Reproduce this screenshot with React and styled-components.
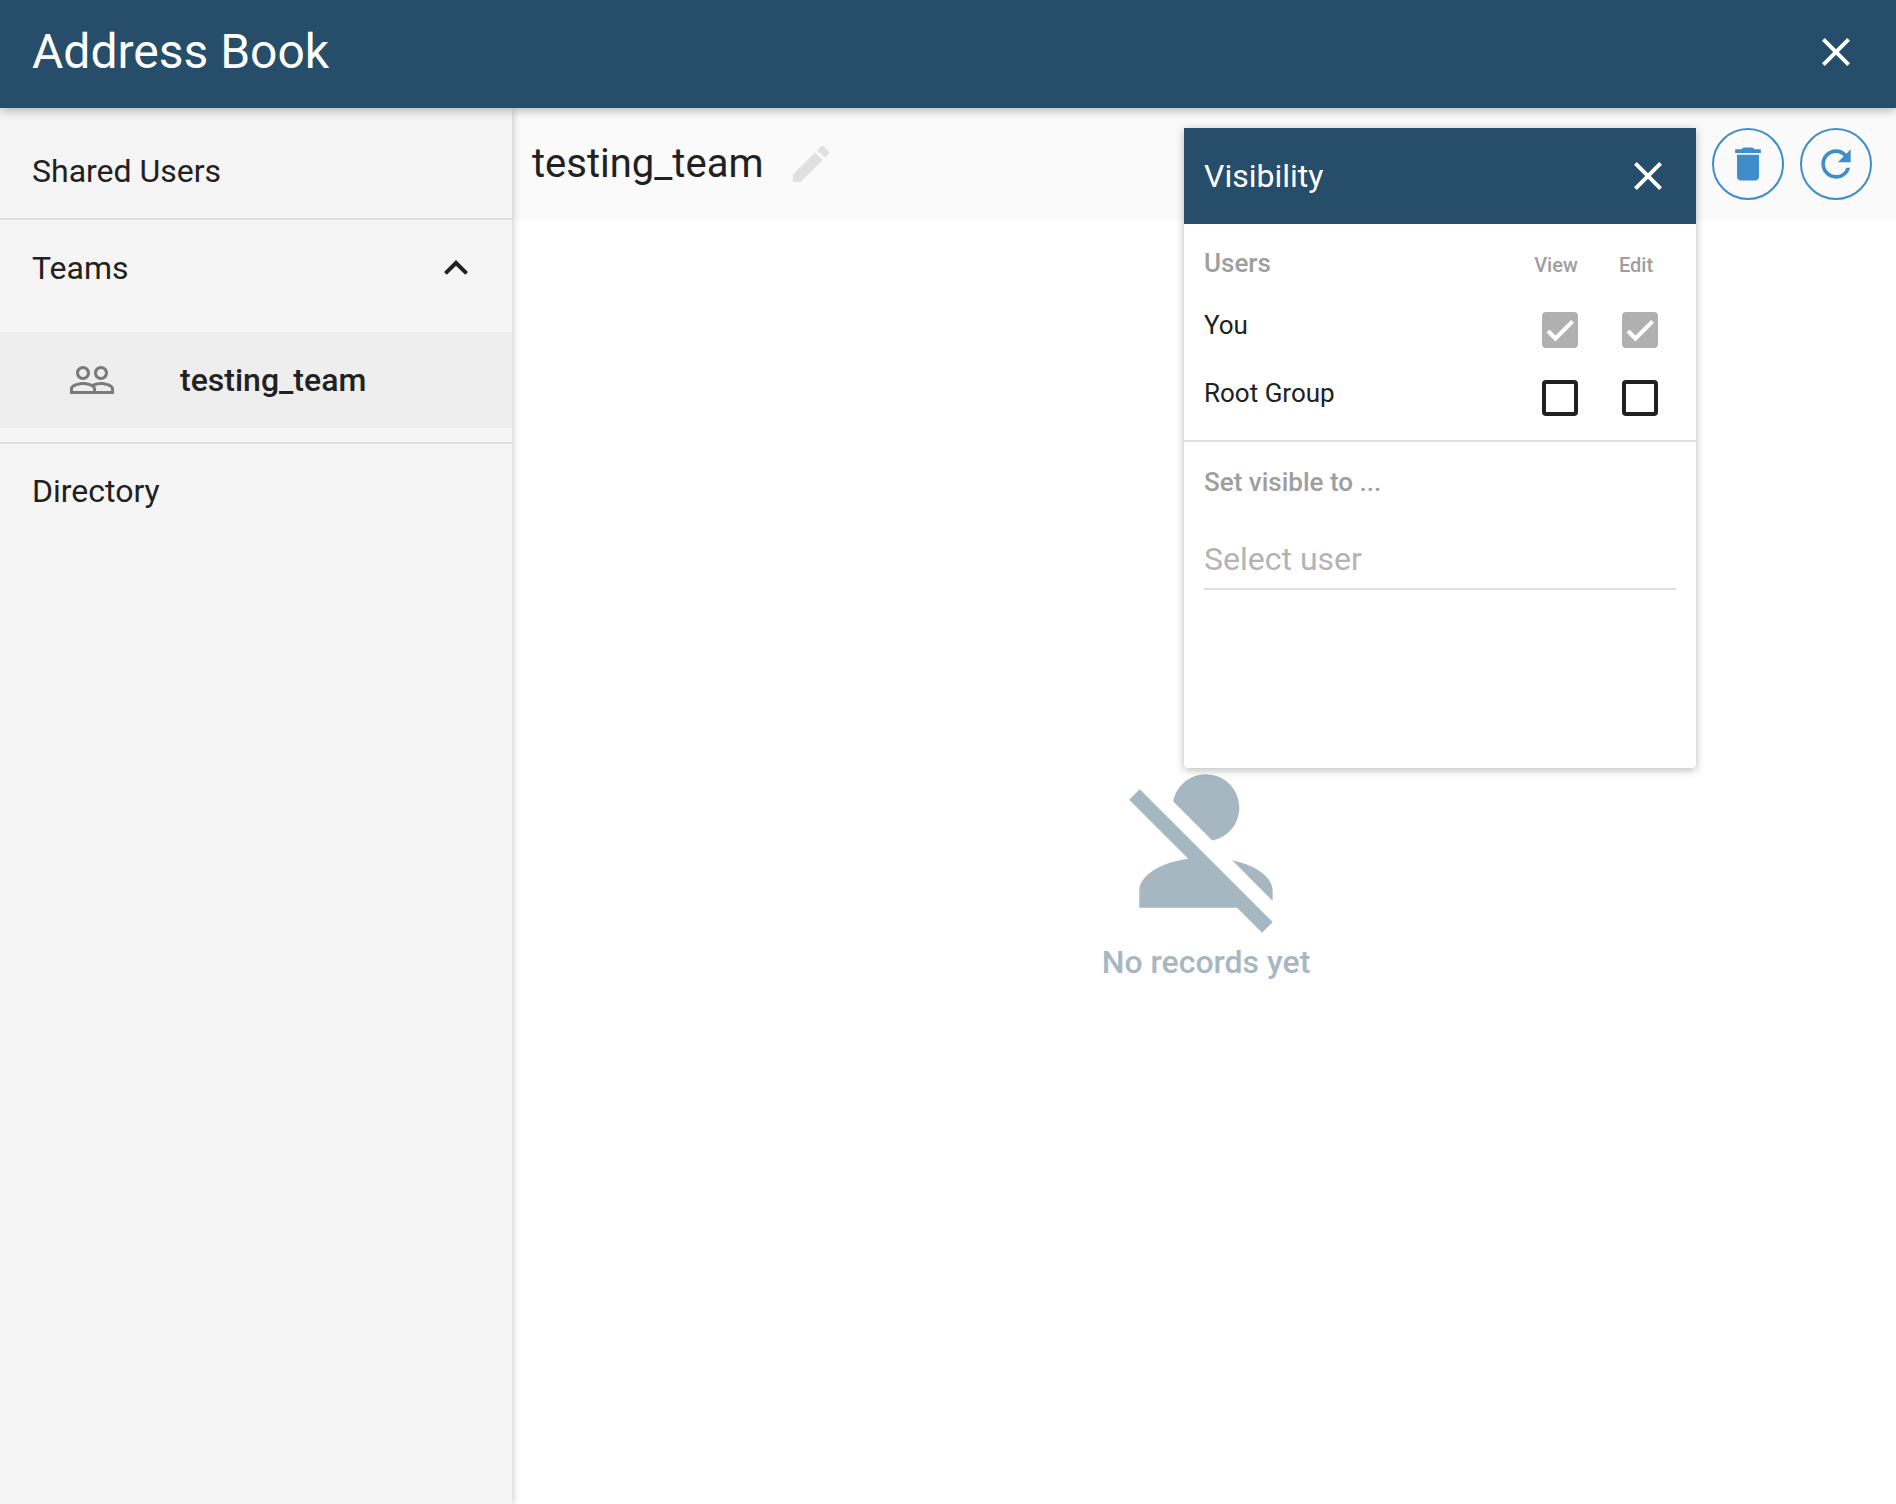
import React, { useState } from "react";
import styled, { createGlobalStyle } from "styled-components";
import {
  MdClose,
  MdDelete,
  MdEdit,
  MdExpandLess,
  MdExpandMore,
  MdPeopleOutline,
  MdRefresh,
} from "react-icons/md";

const color = {
  navy: "#264d69",
  blue: "#3f8dca",
  ink: "#212121",
  muted: "#9e9e9e",
  hint: "#b3b3b3",
  line: "#e0e0e0",
  slate: "#a7b7c2",
};

const GlobalStyle = createGlobalStyle`
  *, *::before, *::after { box-sizing: border-box; }
  body {
    margin: 0;
    font-family: Roboto, "Liberation Sans", sans-serif;
    color: ${color.ink};
    background: #fff;
  }
`;

const Page = styled.div`
  display: flex;
  flex-direction: column;
  min-height: 100vh;
`;

const Header = styled.header`
  display: flex;
  align-items: center;
  justify-content: space-between;
  position: relative;
  z-index: 2;
  padding: 20px 36px 24px 32px;
  color: #fff;
  background: ${color.navy};
  box-shadow: 0 2px 10px rgba(0, 0, 0, 0.3);
`;

const Title = styled.h1`
  margin: 0;
  font-size: 48px;
  line-height: 64px;
  font-weight: 400;
`;

const IconButton = styled.button`
  display: flex;
  padding: 0;
  border: 0;
  background: none;
  color: ${(p) => p.$tone || "inherit"};
  font-size: 48px;
  cursor: pointer;
`;

const Body = styled.div`
  display: flex;
  flex: 1;
`;

const Sidebar = styled.nav`
  flex: 0 0 512px;
  position: relative;
  z-index: 1;
  padding-top: 16px;
  background: #f5f5f5;
  box-shadow: 0 0 8px rgba(0, 0, 0, 0.26);
`;

const Section = styled.div`
  border-bottom: ${(p) => (p.$last ? "0" : `2px solid ${color.line}`)};
`;

const NavLink = styled.a`
  display: flex;
  align-items: center;
  height: 94px;
  padding: 0 32px;
  font-size: 32px;
  line-height: 40px;
  color: inherit;
  text-decoration: none;
`;

const NavToggle = styled.button`
  display: flex;
  align-items: center;
  justify-content: space-between;
  width: 100%;
  height: 96px;
  padding: 0 32px;
  border: 0;
  background: none;
  color: inherit;
  font: inherit;
  font-size: 32px;
  line-height: 40px;
  cursor: pointer;

  svg {
    font-size: 48px;
  }
`;

const TeamList = styled.ul`
  margin: 0;
  padding: 16px 0 14px;
  list-style: none;
`;

const TeamLink = styled.a`
  display: flex;
  align-items: center;
  gap: 64px;
  height: 96px;
  padding: 0 32px 0 68px;
  background: #eeeeee;
  color: inherit;
  font-size: 32px;
  line-height: 40px;
  font-weight: 500;
  text-decoration: none;

  svg {
    font-size: 48px;
    color: #7a7a7a;
  }
`;

const Main = styled.main`
  display: flex;
  flex: 1;
  flex-direction: column;
  min-width: 0;
`;

const Toolbar = styled.div`
  display: flex;
  align-items: center;
  position: relative;
  gap: 16px;
  height: 112px;
  padding: 0 24px 0 20px;
  background: #fafafa;
`;

const TeamName = styled.h2`
  display: flex;
  align-items: center;
  gap: 24px;
  flex: 1;
  margin: 0;
  font-size: 40px;
  line-height: 48px;
  font-weight: 400;
`;

const RoundButton = styled.button`
  display: flex;
  align-items: center;
  justify-content: center;
  width: 72px;
  height: 72px;
  padding: 0;
  border: 2px solid ${color.blue};
  border-radius: 50%;
  background: none;
  color: ${color.blue};
  font-size: 44px;
  cursor: pointer;
`;

const Panel = styled.section`
  position: absolute;
  top: 20px;
  right: 200px;
  width: 512px;
  min-height: 640px;
  border-radius: 0 0 4px 4px;
  background: #fff;
  box-shadow: 0 2px 8px rgba(0, 0, 0, 0.28);
`;

const PanelHeader = styled.div`
  display: flex;
  align-items: center;
  justify-content: space-between;
  height: 96px;
  padding: 0 24px 0 20px;
  background: ${color.navy};
  color: #fff;
`;

const PanelTitle = styled.h3`
  margin: 0;
  font-size: 32px;
  line-height: 40px;
  font-weight: 400;
`;

const PanelSection = styled.div`
  padding: ${(p) => p.$padding};
  border-bottom: ${(p) => (p.$divided ? `2px solid ${color.line}` : "0")};
`;

const UserTable = styled.table`
  width: 100%;
  border-collapse: collapse;
  table-layout: fixed;
`;

const HeadCell = styled.th`
  width: ${(p) => (p.$narrow ? "80px" : "auto")};
  padding: ${(p) => (p.$narrow ? "23px 8px 15px 0" : "23px 0 15px")};
  color: ${color.muted};
  font-size: ${(p) => (p.$narrow ? "20px" : "26px")};
  line-height: 32px;
  font-weight: 500;
  text-align: ${(p) => (p.$narrow ? "center" : "left")};
  vertical-align: baseline;
`;

const NameCell = styled.th`
  height: 68px;
  padding: 0 0 10px;
  font-size: 26px;
  line-height: 32px;
  font-weight: 400;
  text-align: left;
`;

const CheckCell = styled.td`
  padding: 0;
`;

const CheckWrap = styled.span`
  display: grid;
  place-items: center;

  > * {
    grid-area: 1 / 1;
  }

  svg {
    width: 28px;
    height: 28px;
    overflow: visible;
    fill: none;
    stroke: #fff;
    stroke-width: 3.5;
    pointer-events: none;
  }
`;

const CheckInput = styled.input`
  appearance: none;
  width: 36px;
  height: 36px;
  margin: 0;
  border: 4px solid ${color.ink};
  border-radius: 4px;
  background: #fff;

  &:checked {
    background: ${color.ink};
  }

  &:disabled {
    border-color: #b0b0b0;
    background: #b0b0b0;
  }
`;

const FieldLabel = styled.label`
  display: block;
  color: ${color.muted};
  font-size: 26px;
  line-height: 32px;
  font-weight: 500;
`;

const UserInput = styled.input`
  display: block;
  width: 100%;
  height: 64px;
  margin-top: 28px;
  padding: 4px 0 0;
  border: 0;
  border-bottom: 2px solid ${color.line};
  outline: 0;
  background: none;
  color: inherit;
  font: inherit;
  font-size: 32px;
  line-height: 40px;

  &::placeholder {
    color: ${color.hint};
    opacity: 1;
  }
`;

const EmptyState = styled.div`
  display: flex;
  flex: 1;
  flex-direction: column;
  align-items: center;
  justify-content: center;
  padding-left: 4px;
  color: ${color.slate};
  font-size: 32px;
  line-height: 42px;
  font-weight: 500;

  svg {
    width: 200px;
    height: 200px;
    fill: currentColor;
  }

  p {
    margin: 0;
  }
`;

function Checkbox({ label, checked, ...rest }) {
  const [on, setOn] = useState(Boolean(checked));
  return (
    <CheckWrap>
      <CheckInput
        type="checkbox"
        aria-label={label}
        checked={on}
        onChange={(e) => setOn(e.target.checked)}
        {...rest}
      />
      {on && (
        <svg viewBox="0 0 24 24" aria-hidden="true">
          <path d="M1.73 12.91 8.1 19.28 22.79 4.59" />
        </svg>
      )}
    </CheckWrap>
  );
}

const users = [
  { name: "You", granted: true },
  { name: "Root Group", granted: false },
];

export default function App() {
  const [teamsOpen, setTeamsOpen] = useState(true);
  const [panelOpen, setPanelOpen] = useState(true);

  return (
    <Page>
      <GlobalStyle />
      <Header>
        <Title>Address Book</Title>
        <IconButton type="button" aria-label="Close">
          <MdClose />
        </IconButton>
      </Header>
      <Body>
        <Sidebar>
          <Section>
            <NavLink href="#shared">Shared Users</NavLink>
          </Section>
          <Section>
            <NavToggle
              type="button"
              aria-expanded={teamsOpen}
              onClick={() => setTeamsOpen(!teamsOpen)}
            >
              Teams
              {teamsOpen ? <MdExpandLess /> : <MdExpandMore />}
            </NavToggle>
            {teamsOpen && (
              <TeamList>
                <li>
                  <TeamLink href="#testing_team" aria-current="page">
                    <MdPeopleOutline />
                    testing_team
                  </TeamLink>
                </li>
              </TeamList>
            )}
          </Section>
          <Section $last>
            <NavLink href="#directory">Directory</NavLink>
          </Section>
        </Sidebar>
        <Main>
          <Toolbar>
            <TeamName>
              testing_team
              <IconButton type="button" aria-label="Rename team" $tone={color.line}>
                <MdEdit />
              </IconButton>
            </TeamName>
            <RoundButton type="button" aria-label="Delete team">
              <MdDelete />
            </RoundButton>
            <RoundButton type="button" aria-label="Refresh">
              <MdRefresh />
            </RoundButton>
            {panelOpen && (
              <Panel aria-label="Visibility">
                <PanelHeader>
                  <PanelTitle>Visibility</PanelTitle>
                  <IconButton
                    type="button"
                    aria-label="Close visibility"
                    onClick={() => setPanelOpen(false)}
                  >
                    <MdClose />
                  </IconButton>
                </PanelHeader>
                <PanelSection $padding="0 16px 8px 20px" $divided>
                  <UserTable>
                    <thead>
                      <tr>
                        <HeadCell scope="col">Users</HeadCell>
                        <HeadCell scope="col" $narrow>View</HeadCell>
                        <HeadCell scope="col" $narrow>Edit</HeadCell>
                      </tr>
                    </thead>
                    <tbody>
                      {users.map(({ name, granted }) => (
                        <tr key={name}>
                          <NameCell scope="row">{name}</NameCell>
                          {["view", "edit"].map((right) => (
                            <CheckCell key={right}>
                              <Checkbox
                                label={`${name} can ${right}`}
                                checked={granted}
                                disabled={granted}
                              />
                            </CheckCell>
                          ))}
                        </tr>
                      ))}
                    </tbody>
                  </UserTable>
                </PanelSection>
                <PanelSection $padding="24px 20px">
                  <FieldLabel htmlFor="visible-to">Set visible to ...</FieldLabel>
                  <UserInput id="visible-to" type="text" placeholder="Select user" />
                </PanelSection>
              </Panel>
            )}
          </Toolbar>
          <EmptyState>
            <svg viewBox="0 0 24 24" aria-hidden="true">
              <path d="M12,4A4,4 0 0,1 16,8C16,9.95 14.6,11.58 12.75,11.93L8.07,7.25C8.42,5.4 10.05,4 12,4M12.28,14L18.28,20L20,21.72L18.73,23L15.73,20H4V18C4,16.16 6.5,14.61 9.87,14.14L2.78,7.05L4.05,5.78L12.28,14M20,18V19.18L15.14,14.32C18,14.93 20,16.35 20,18Z" />
            </svg>
            <p>No records yet</p>
          </EmptyState>
        </Main>
      </Body>
    </Page>
  );
}
